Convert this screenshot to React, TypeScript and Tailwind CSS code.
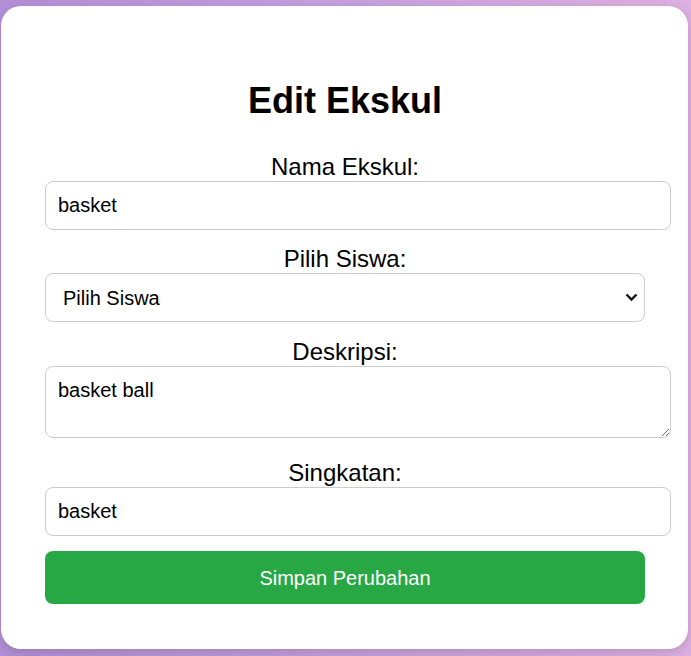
import React from "react";

export default function App() {
  return (
    <div
      className="w-[691px] h-[656px] overflow-hidden bg-gradient-to-r from-[#b28fd6] to-[#ddb0e2] pt-[6px]"
      style={{ fontFamily: '"Liberation Sans", Arial, sans-serif' }}
    >
      <div className="ml-[1px] w-[687px] h-[643px] bg-white rounded-[20px] shadow-[0_4px_12px_rgba(0,0,0,0.15)] pl-[44px] pt-[74px]">
        <h2 className="w-[600px] text-center text-[36px] leading-[42px] font-bold text-black">
          Edit Ekskul
        </h2>
        <form className="mt-[31px] flex flex-col items-start" onSubmit={(e) => e.preventDefault()}>
          <label className="block w-[600px] text-center text-[24px] leading-[28px] text-black">
            Nama Ekskul:
          </label>
          <input
            readOnly
            defaultValue="basket"
            className="block w-[626px] h-[49px] px-[12px] border border-[#cccccc] rounded-[8px] text-[20px] text-black outline-none"
          />
          <label className="mt-[15px] block w-[600px] text-center text-[24px] leading-[28px] text-black">
            Pilih Siswa:
          </label>
          <div className="relative w-[600px] h-[49px]">
            <select className="appearance-none w-[600px] h-[49px] pl-[17px] border border-[#cccccc] rounded-[8px] text-[20px] text-black bg-white outline-none">
              <option>Pilih Siswa</option>
            </select>
            <svg
              className="absolute right-[7px] top-[20px] pointer-events-none"
              width="13"
              height="9"
              viewBox="0 0 13 9"
            >
              <path d="M1.5 1.5 L6.5 6.5 L11.5 1.5" fill="none" stroke="#111" strokeWidth="2.4" />
            </svg>
          </div>
          <label className="mt-[16px] block w-[600px] text-center text-[24px] leading-[28px] text-black">
            Deskripsi:
          </label>
          <textarea
            readOnly
            defaultValue="basket ball"
            className="block w-[626px] h-[72px] px-[12px] pt-[11px] border border-[#cccccc] rounded-[8px] text-[20px] leading-[24px] text-black outline-none"
          />
          <label className="mt-[21px] block w-[600px] text-center text-[24px] leading-[28px] text-black">
            Singkatan:
          </label>
          <input
            readOnly
            defaultValue="basket"
            className="block w-[626px] h-[49px] px-[12px] border border-[#cccccc] rounded-[8px] text-[20px] text-black outline-none"
          />
          <button
            type="submit"
            className="mt-[15px] w-[600px] h-[53px] rounded-[8px] bg-[#28a745] text-white text-[20px]"
          >
            Simpan Perubahan
          </button>
        </form>
      </div>
    </div>
  );
}
